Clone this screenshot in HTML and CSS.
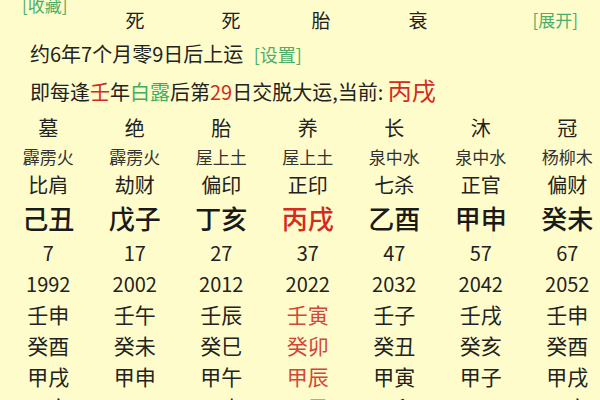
FILE: index.html
```html
<!DOCTYPE html>
<html lang="zh-CN">
<head>
    <meta charset="UTF-8" />
    <meta name="viewport" content="width=device-width, initial-scale=1.0" />
    <title>大运排盘</title>
    <link rel="stylesheet" href="styles.css">
</head>
<body>
    <div class="page">
        <div class="top">
            <div class="top-side">
                <span class="link keep">[收藏]</span>
            </div>
            <div class="top-cols">
                <div class="top-row cut">
                    <span>天乙贵人</span>
                    <span>天乙贵人</span>
                    <span></span>
                    <span>天乙贵人</span>
                </div>
                <div class="top-row main">
                    <span>死</span>
                    <span>死</span>
                    <span>胎</span>
                    <span>衰</span>
                </div>
            </div>
            <div class="top-side right">
                <span class="link open">[展开]</span>
            </div>
        </div>

        <div class="line1">约6年7个月零9日后上运 <span class="link small">[设置]</span></div>
        <div class="line2">即每逢<span class="red">壬</span>年<span class="green">白露</span>后第<span class="red">29</span>日交脱大运,当前: <span class="red now">丙戌</span></div>

        <div class="dayun">
            <div class="row stage">
                <span>墓</span><span>绝</span><span>胎</span><span>养</span><span>长</span><span>沐</span><span>冠</span>
            </div>
            <div class="row nayin">
                <span>霹雳火</span><span>霹雳火</span><span>屋上土</span><span>屋上土</span><span>泉中水</span><span>泉中水</span><span>杨柳木</span>
            </div>
            <div class="row shishen">
                <span>比肩</span><span>劫财</span><span>偏印</span><span>正印</span><span>七杀</span><span>正官</span><span>偏财</span>
            </div>
            <div class="row pillar">
                <span>己丑</span><span>戊子</span><span>丁亥</span><span class="red">丙戌</span><span>乙酉</span><span>甲申</span><span>癸未</span>
            </div>
            <div class="row age">
                <span>7</span><span>17</span><span>27</span><span>37</span><span>47</span><span>57</span><span>67</span>
            </div>
            <div class="row year">
                <span>1992</span><span>2002</span><span>2012</span><span>2022</span><span>2032</span><span>2042</span><span>2052</span>
            </div>
            <div class="row liunian">
                <span>壬申</span><span>壬午</span><span>壬辰</span><span class="soft-red">壬寅</span><span>壬子</span><span>壬戌</span><span>壬申</span>
            </div>
            <div class="row liunian">
                <span>癸酉</span><span>癸未</span><span>癸巳</span><span class="soft-red">癸卯</span><span>癸丑</span><span>癸亥</span><span>癸酉</span>
            </div>
            <div class="row liunian">
                <span>甲戌</span><span>甲申</span><span>甲午</span><span class="soft-red">甲辰</span><span>甲寅</span><span>甲子</span><span>甲戌</span>
            </div>
            <div class="row liunian">
                <span>乙亥</span><span>乙酉</span><span>乙未</span><span class="soft-red">乙巳</span><span>乙卯</span><span>乙丑</span><span>乙亥</span>
            </div>
        </div>
    </div>
</body>
</html>
```

FILE: styles.css
```css
html, body {
    margin: 0;
    height: 100%;
    overflow: hidden;
}
body {
    background-color: #fefccb;
    color: #222;
    font-family: "Noto Sans CJK SC", "Noto Sans", sans-serif;
}
.page {
    width: 600px;
    overflow: hidden;
}
.red {
    color: #d42a22;
}
.green {
    color: #3fae5f;
}
.soft-red {
    color: #d3473b;
}
.link {
    color: #4cae6a;
    font-size: 17px;
}

/* top block, first line cut by the window */
.top {
    display: flex;
    margin-top: -18px;
    height: 54px;
}
.top-side {
    width: 87px;
    padding-left: 22px;
    box-sizing: border-box;
}
.top-side .keep {
    display: block;
    line-height: 20px;
    padding-top: 13px;
}
.top-side.right {
    width: 127px;
    padding-left: 0;
    padding-right: 22px;
    text-align: right;
}
.top-side .open {
    display: block;
    line-height: 32px;
    padding-top: 22px;
}
.top-cols {
    width: 386px;
}
.top-row {
    display: grid;
    grid-template-columns: 96px 96px 84px 110px;
    text-align: center;
    font-size: 19px;
    line-height: 32px;
}
.top-row.cut {
    font-size: 18px;
    line-height: 16px;
}
.top-row.main {
    padding-top: 6px;
}

.line1 {
    padding-left: 30px;
    font-size: 20px;
    line-height: 36px;
    height: 36px;
}
.line1 .small {
    font-size: 18px;
    margin-left: 6px;
}
.line2 {
    padding-left: 30px;
    font-size: 20px;
    line-height: 36px;
    height: 41px;
}
.line2 .now {
    font-size: 24px;
}

/* dayun table */
.dayun {
    margin-left: 5px;
}
.row {
    display: grid;
    grid-template-columns: repeat(7, 86.5px);
    text-align: center;
    white-space: nowrap;
}
.stage {
    font-size: 20px;
    line-height: 30px;
}
.nayin {
    font-size: 17px;
    line-height: 28px;
    color: #333;
}
.shishen {
    font-size: 20px;
    line-height: 28px;
}
.pillar {
    font-size: 26px;
    font-weight: 500;
    line-height: 38px;
    color: #1a1a1a;
}
.age {
    font-size: 20px;
    line-height: 32px;
}
.year {
    font-size: 20px;
    line-height: 30px;
}
.liunian {
    font-size: 21px;
    line-height: 31px;
}
```
